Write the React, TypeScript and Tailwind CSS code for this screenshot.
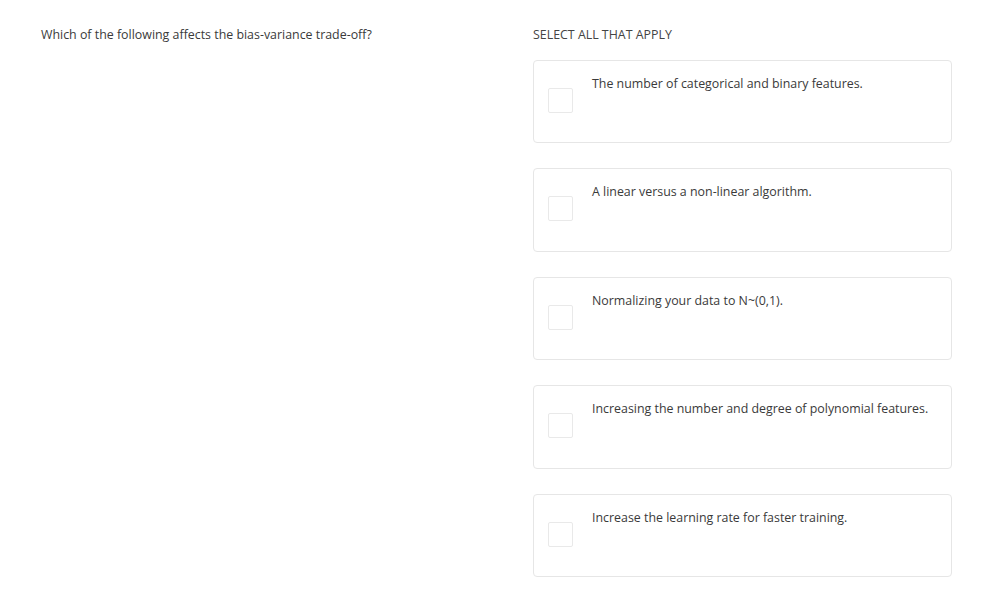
const options = [
  'The number of categorical and binary features.',
  'A linear versus a non-linear algorithm.',
  'Normalizing your data to N~(0,1).',
  'Increasing the number and degree of polynomial features.',
  'Increase the learning rate for faster training.',
];

export default function App() {
  return (
    <div className="w-[1000px] h-[604px] bg-white text-[#3a3a3a] font-['Open_Sans',sans-serif] text-[12.4px] flex">
      <div className="w-[533px] pl-[41px] pt-[26px]">
        <p>Which of the following affects the bias-variance trade-off?</p>
      </div>
      <div className="w-[419px] pt-[26px]">
        <p className="text-[#444]">SELECT ALL THAT APPLY</p>
        <div className="mt-[15px] flex flex-col gap-[25px]">
          {options.map(o => (
            <label key={o} className="h-[83.5px] border border-[#e6e6e6] rounded-[4px] flex pl-[14px] pt-[14px]">
              <span className="mt-[13px] w-[25px] h-[25px] border border-[#e9e9e9] rounded-[2px] shrink-0" />
              <span className="ml-[19px]">{o}</span>
            </label>
          ))}
        </div>
      </div>
    </div>
  );
}
